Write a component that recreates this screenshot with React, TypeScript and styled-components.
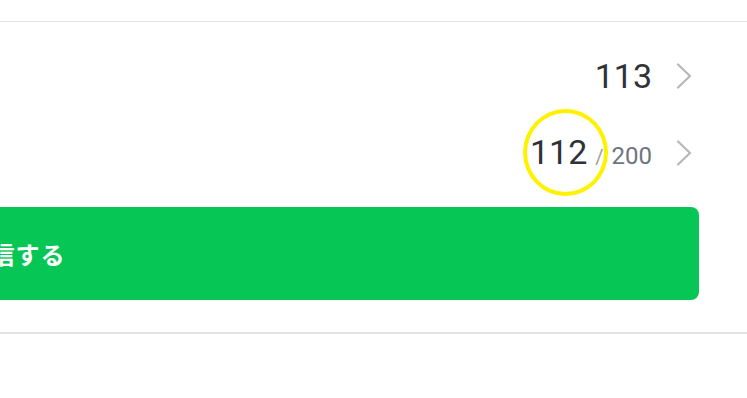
import React from 'react';
import styled, { createGlobalStyle } from 'styled-components';

const GlobalStyle = createGlobalStyle`
    html, body {
        margin:0;
        padding:0;
        background:#ffffff;
    }
    body {
        font-family:Roboto, "Noto Sans CJK JP", sans-serif;
    }
`
const Viewport = styled.div`
    width:747px;
    height:398px;
    overflow:hidden;
    background:#ffffff;
`
const Page = styled.div`
    width:1463px;
    margin-left:-716px;
    padding-top:21px;
`
const Section = styled.section`
    border-top:1px solid #e3e3e3;
    border-bottom:2px solid #e3e3e3;
    padding:15px 48px 32px;
`
const Row = styled.div`
    height:77px;
    display:flex;
    align-items:center;
    justify-content:space-between;
    padding-right:7px;
`
const Label = styled.span`
    font-family:"Noto Sans CJK JP", sans-serif;
    font-size:22px;
    color:#2b2f36;
`
const ValueGroup = styled.div`
    display:flex;
    align-items:baseline;
    position:relative;
`
const Count = styled.span`
    font-family:Roboto, sans-serif;
    font-size:34px;
    color:#2f3237;
    line-height:1;
`
const Slash = styled.span`
    font-family:Roboto, sans-serif;
    font-size:20px;
    color:#9aa0a8;
    margin:0 8px 0 8px;
`
const Max = styled.span`
    font-family:Roboto, sans-serif;
    font-size:24px;
    color:#6e7482;
`
const Chevron = styled.svg`
    width:16px;
    height:26px;
    margin-left:24px;
    flex-shrink:0;
    align-self:center;
`
const Highlight = styled.div`
    position:absolute;
    left:-7px;
    top:50%;
    width:85px;
    height:87px;
    margin-top:-44px;
    box-sizing:border-box;
    border:4px solid #fff200;
    border-radius:50%;
    pointer-events:none;
`
const SendButton = styled.button`
    display:flex;
    align-items:center;
    justify-content:center;
    width:100%;
    height:93px;
    margin-top:16px;
    border:none;
    border-radius:8px;
    background:#06c755;
    color:#ffffff;
    font-family:"Noto Sans CJK JP", sans-serif;
    font-size:24px;
    font-weight:700;
    letter-spacing:1px;
`

const Arrow = () => (
    <Chevron viewBox="0 0 16 26">
        <polyline points="2,1.5 14,13 2,24.5" fill="none" stroke="#b4b7bb" strokeWidth="2.2" strokeLinecap="round" strokeLinejoin="round" />
    </Chevron>
)

export default function App(): JSX.Element {
    return (
        <Viewport>
            <GlobalStyle />
            <Page>
                <Section>
                    <Row>
                        <Label>友だち数</Label>
                        <ValueGroup>
                            <Count>113</Count>
                            <Arrow />
                        </ValueGroup>
                    </Row>
                    <Row>
                        <Label>送信数</Label>
                        <ValueGroup>
                            <Count>112</Count>
                            <Slash>/</Slash>
                            <Max>200</Max>
                            <Arrow />
                            <Highlight />
                        </ValueGroup>
                    </Row>
                    <SendButton>送信する</SendButton>
                </Section>
            </Page>
        </Viewport>
    )
}
